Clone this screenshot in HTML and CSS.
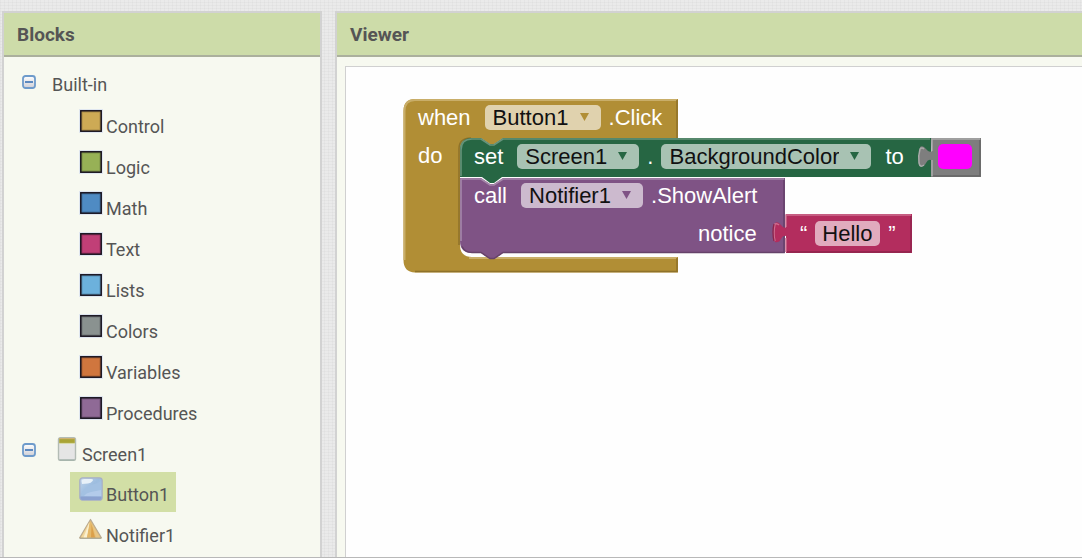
FILE: index.html
```html
<!DOCTYPE html>
<html lang="en">
<head>
<meta charset="utf-8">
<title>Blocks Editor</title>
<link rel="stylesheet" href="styles.css">
</head>
<body>
<svg class="defs" width="0" height="0" aria-hidden="true">
  <defs>
    <linearGradient id="toggle-fill" x1="0" y1="0" x2="0" y2="1"><stop offset="0" stop-color="#fff"/><stop offset="1" stop-color="#cfcfd6"/></linearGradient>
    <linearGradient id="button-fill" x1="0" y1="0" x2="1" y2="1"><stop offset="0" stop-color="#c3d6ec"/><stop offset=".45" stop-color="#9dbddf"/><stop offset="1" stop-color="#aecaea"/></linearGradient>
    <symbol id="minus" viewBox="0 0 14 14">
      <rect x="1" y="1" width="12" height="12" rx="2.5" fill="url(#toggle-fill)" stroke="#6e9bcb" stroke-width="1.8"/>
      <path d="M3 7h8" stroke="#3a72b4" stroke-width="1.6"/>
    </symbol>
    <symbol id="swatch" viewBox="0 0 24 24">
      <rect x=".5" y=".5" width="23" height="23" fill="none" stroke="#dfe6f0"/>
      <rect x="2" y="2" width="20" height="20" fill="currentColor"/>
      <rect x="3" y="3" width="18" height="18" fill="none" stroke="#000" stroke-opacity=".18"/>
      <rect x="1.800" y="1.800" width="20.400" height="20.400" fill="none" stroke="#14101c" stroke-width="1.500"/>
    </symbol>
  </defs>
</svg>
<div class="workspace">
  <nav class="panel panel-blocks" aria-label="Blocks">
    <h2 class="panel-title">Blocks</h2>
    <ul class="tree">
      <li>
        <div class="node"><button class="toggle" aria-label="Collapse Built-in"><svg width="14" height="14"><use href="#minus"/></svg></button><a class="node-link root" href="#built-in"><span class="root-label">Built-in</span></a></div>
        <ul class="branch">
          <li><a class="item" href="#control"><svg class="icon control" width="24" height="24"><use href="#swatch"/></svg><span class="label">Control</span></a></li>
          <li><a class="item" href="#logic"><svg class="icon logic" width="24" height="24"><use href="#swatch"/></svg><span class="label">Logic</span></a></li>
          <li><a class="item" href="#math"><svg class="icon math" width="24" height="24"><use href="#swatch"/></svg><span class="label">Math</span></a></li>
          <li><a class="item" href="#text"><svg class="icon text" width="24" height="24"><use href="#swatch"/></svg><span class="label">Text</span></a></li>
          <li><a class="item" href="#lists"><svg class="icon lists" width="24" height="24"><use href="#swatch"/></svg><span class="label">Lists</span></a></li>
          <li><a class="item" href="#colors"><svg class="icon colors" width="24" height="24"><use href="#swatch"/></svg><span class="label">Colors</span></a></li>
          <li><a class="item" href="#variables"><svg class="icon variables" width="24" height="24"><use href="#swatch"/></svg><span class="label">Variables</span></a></li>
          <li><a class="item" href="#procedures"><svg class="icon procedures" width="24" height="24"><use href="#swatch"/></svg><span class="label">Procedures</span></a></li>
        </ul>
      </li>
      <li>
        <div class="node"><button class="toggle" aria-label="Collapse Screen1"><svg width="14" height="14"><use href="#minus"/></svg></button><a class="node-link" href="#screen1"><svg class="icon" width="24" height="24" viewBox="0 0 24 24">
          <rect x="3.500" y=".8" width="17" height="22.400" rx="1.800" fill="#e5e5e5" stroke="#b3bcb5" stroke-width="1.400"/>
          <path d="M4.200 1.500h15.600v4.600H4.200z" fill="#a9a436"/><path d="M4.200 1.600h15.600" stroke="#cdb274" stroke-width="1.200"/><path d="M4.200 6.400h15.600" stroke="#d6d9a4"/><path d="M4.500 23h15" stroke="#9bada4"/>
        </svg><span class="label">Screen1</span></a></div>
        <ul class="branch">
          <li><a class="item selected" href="#button1" aria-current="true"><svg class="icon" width="24" height="24" viewBox="0 0 24 24">
            <rect x=".8" y=".8" width="22.400" height="22.400" rx="2.800" fill="url(#button-fill)" stroke="#a9afc4" stroke-width="1.200"/>
            <path d="M2 19Q4 10 12 8T22 4v15z" fill="#a3c1e2"/>
            <path d="M5 19q2-3 7-4t10-2v6z" fill="#b3cbea"/>
            <path d="M2.500 4q0-2 3-2H12q3 0 1.500 2T9 6.500L3 7z" fill="#e8f1f8"/>
            <path d="M1.400 19.500h21.200v1.500q0 2-2 2H3.500q-2.100 0-2.100-2z" fill="#8ba2d0"/>
          </svg><span class="label">Button1</span></a></li>
          <li><a class="item" href="#notifier1"><svg class="icon" width="24" height="24" viewBox="0 0 24 24">
            <path d="M11.500 1.500 22.500 20H.5z" fill="#e5bd72" stroke="#b9aa91" stroke-linejoin="round" stroke-width="1.200"/>
            <path d="M10.500 4 7.500 19.500H2z" fill="#f0d79d"/><path d="M10.500 4 8 19.500H4.500z" fill="#faf0cf"/><path d="M11.500 4v15.500H8z" fill="#e5b766"/><path d="M12.500 6 16 19.500h-4z" fill="#dba04a"/><path d="m13 6 8 13.500h-4z" fill="#e8c584"/>
            <path d="M1 20.300h21" stroke="#a7a38c"/>
          </svg><span class="label">Notifier1</span></a></li>
        </ul>
      </li>
    </ul>
  </nav>
  <main class="panel panel-viewer">
    <h2 class="panel-title">Viewer</h2>
    <div class="canvas">
      <div class="stack">
        <svg class="shapes" width="580" height="176" viewBox="0 0 580 176" aria-hidden="true">
          <g transform="translate(0 1)">
          <path d="M12 0H275V39H100l-9 6h-4l-9-6H69q-12 0-12 12V146q0 12 12 12H275V173.500H12Q.5 173 .5 161V12Q.5 0 12 0z" fill="#b18e35"/>
          <path d="M1.500 161V12Q1.500 1 12 1H274M66 159H274" fill="none" stroke="#c9ae69" stroke-width="2"/>
          <path d="M274 1V39M274 159V172.500H12M56 146V50q0-11 12-11" fill="none" stroke="#8e722a" stroke-width="1.500"/>
          <path d="M69 39h9l9 6h4l9-6H528V78H57V51q0-12 12-12z" fill="#266643"/>
          <path d="M58 77V51q0-11 11-11h9l9 6h4l9-6H527" fill="none" stroke="#67947b" stroke-width="1.600"/>
          <path d="M57 79H78l9 6h4l9-6H382V154H100l-9 6h-4l-9-6H69q-12 0-12-12z" fill="#7f5385"/>
          <path d="M79 78l8 6h4l8-6z" fill="#266643"/>
          <path d="M58 142V80H78l9 6h4l9-6H381" fill="none" stroke="#a587aa" stroke-width="1.600"/>
          <path d="M381 81V153.500H100l-9 6h-4l-9-6H69q-7 0-10-6" fill="none" stroke="#66426a" stroke-width="1.500"/>
          <path d="M528 39H578V78H528V61q-3-1-5 3t-6 3q-2-4-1-10t1-9q3-2 6 2t6 2z" fill="#7e7e7e"/>
          <path d="M529 77V61M529 52V40H577M521 66q-4 3-5-2-1-7 1-14 2-2 4 0" fill="none" stroke="#aaa" stroke-width="1.500"/>
          <path d="M577 41V77H530" fill="none" stroke="#656565" stroke-width="1.500"/>
          <rect x="535" y="45" width="34" height="25" rx="5" fill="#f0f"/>
          <path d="M383 115H509V154H383V137q-3-1-5 3t-6 3q-2-4-1-10t1-9q3-2 6 2t5 2z" fill="#b32d5e"/>
          <path d="M383 153V139M383 128V116H508M372 142q-2-7 0-17 2-1 4 1" fill="none" stroke="#cd6d8e" stroke-width="1.500"/>
          <path d="M508 117V153H384M371 142q-2-9 0-17" fill="none" stroke="#8d244b" stroke-width="1.300"/>
          </g>
        </svg>
        <div class="row row-event"><span>when</span><span class="field event"><select aria-label="Component"><option>Button1</option></select><svg class="arrow" width="9" height="8" viewBox="0 0 9 8"><path d="M0 0h9L4.500 8z" fill="currentColor"/></svg></span><span>.Click</span></div>
        <div class="row row-do"><span>do</span></div>
        <div class="row row-set"><span class="verb">set</span><span class="field setter"><select aria-label="Screen component"><option>Screen1</option></select><svg class="arrow" width="9" height="8" viewBox="0 0 9 8"><path d="M0 0h9L4.500 8z" fill="currentColor"/></svg></span><span>.</span><span class="field setter"><select aria-label="Property"><option>BackgroundColor</option></select><svg class="arrow" width="9" height="8" viewBox="0 0 9 8"><path d="M0 0h9L4.500 8z" fill="currentColor"/></svg></span><span class="to">to</span></div>
        <div class="row row-call"><span class="verb">call</span><span class="field method"><select aria-label="Notifier component"><option>Notifier1</option></select><svg class="arrow" width="9" height="8" viewBox="0 0 9 8"><path d="M0 0h9L4.500 8z" fill="currentColor"/></svg></span><span>.ShowAlert</span></div>
        <div class="row row-notice"><label for="notice">notice</label></div>
        <div class="row row-string"><span>“</span><input class="string" id="notice" type="text" value="Hello"><span>”</span></div>
      </div>
    </div>
  </main>
</div>
</body>
</html>
```
FILE: styles.css
```css
* { box-sizing: border-box; }

body {
  margin: 0;
  font-family: Roboto, sans-serif;
  font-size: 18px;
  color: #555;
  background-color: #eaeaea;
  background-image:
    repeating-linear-gradient(0deg, rgba(0, 0, 0, .025) 0 1px, transparent 1px 3px),
    repeating-linear-gradient(90deg, rgba(0, 0, 0, .025) 0 1px, transparent 1px 4px);
}

ul { list-style: none; margin: 0; padding: 0; }
a { color: inherit; text-decoration: none; }
.defs { position: absolute; }

.workspace {
  display: flex;
  gap: 13px;
  height: 100vh;
  padding: 11px 0 0 2px;
  border-bottom: 1px solid #b8b8b8;
  overflow: hidden;
}

.panel {
  display: flex;
  flex-direction: column;
  border: 2px solid #d2d2d2;
  border-bottom: 0;
  background: #f7f9f0;
}
.panel-blocks { flex: 0 0 320px; }
.panel-viewer { flex: 1; border-right: 0; min-width: 0; }

.panel-title {
  margin: 0;
  padding: 2px 13px 0;
  font-size: 19px;
  font-weight: 700;
  line-height: 40px;
  background: #cddca9;
  border-bottom: 2px solid #abb09d;
}

.tree { display: grid; gap: 1px; padding: 7px 0 0 18px; }
.node { display: flex; height: 40px; }
.toggle {
  display: block;
  width: 14px;
  height: 14px;
  margin: 11px 19px 0 0;
  padding: 0;
  border: 0;
  background: none;
}
.toggle svg { display: block; }
.node-link { display: flex; gap: 3px; padding-top: 5px; }
.node-link.root { margin-left: -3px; }
.root-label { padding-top: 4px; line-height: 24px; }
.label { padding-top: 6px; line-height: 24px; }
.branch { display: grid; gap: 1px; padding-left: 48px; }
.branch li { height: 40px; }
.item {
  display: inline-flex;
  gap: 3px;
  height: 40px;
  padding: 5px 7px 0 9px;
  vertical-align: top;
}
.item.selected { background: #d2dfa6; }
.icon { flex: none; }

.control { color: #cdaa55; }
.logic { color: #97b156; }
.math { color: #4f8bc3; }
.text { color: #c13f77; }
.lists { color: #6cb1dc; }
.colors { color: #8a9290; }
.variables { color: #d0763e; }
.procedures { color: #8f6a96; }

.canvas {
  position: relative;
  flex: 1;
  margin: 9px 0 0 8px;
  background: #fefefe;
  border: 1px solid #d0d0d0;
  border-width: 1px 0 0 1px;
}

.stack {
  position: absolute;
  left: 57px;
  top: 31px;
  width: 580px;
  height: 176px;
  font: 22px/24px "Liberation Sans", sans-serif;
  color: #fff;
}
.shapes { display: block; }
.row { position: absolute; display: flex; align-items: center; height: 25px; white-space: nowrap; }
.row-event { left: 15px; top: 7px; gap: 14px; }
.row-event .field { margin-right: -6px; }
.row-do { left: 15px; top: 45px; }
.row-set { left: 71px; top: 46px; gap: 8px; }
.row-set .verb { margin-right: 6px; }
.row-set .to { margin-left: 6px; }
.row-call { left: 71px; top: 85px; gap: 8px; }
.row-call .verb { margin-right: 6px; }
.row-notice { left: 295px; top: 123px; }
.row-string { left: 397px; top: 123px; gap: 8px; }

.field { position: relative; display: block; height: 25px; }
.field select, .string {
  display: block;
  height: 25px;
  margin: 0;
  border: 0;
  border-radius: 5px;
  font: inherit;
  color: #111;
  background: rgba(255, 255, 255, .6);
  appearance: none;
}
.field select { padding: 0 32px 0 8px; }
.string { width: 65px; padding: 0 7px; }
.arrow { position: absolute; right: 12px; top: 8px; pointer-events: none; }
.event { color: #b18e35; }
.setter { color: #266643; }
.method { color: #7f5385; }
```
